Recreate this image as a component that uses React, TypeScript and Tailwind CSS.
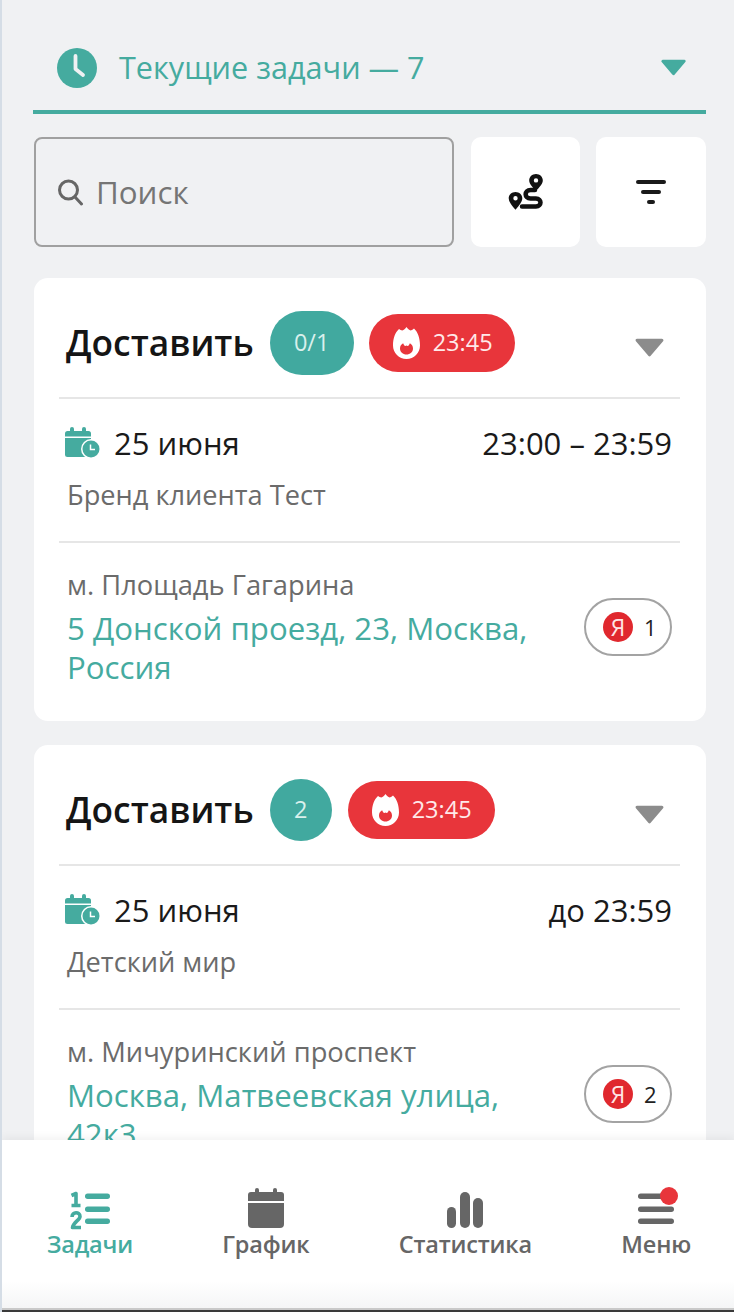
import React from 'react';

const ClockIcon = () => (
  <svg width="40" height="40" viewBox="0 0 40 40" className="shrink-0">
    <circle cx="20" cy="20" r="20" fill="#45ab9f" />
    <path d="M18.500 8v13l7.500 6" fill="none" stroke="#f0f1f3" strokeWidth="3.800" strokeLinecap="round" strokeLinejoin="round" />
  </svg>
);

const SearchIcon = () => (
  <svg width="28" height="28" viewBox="0 0 28 28" className="shrink-0">
    <circle cx="12.500" cy="12" r="9" fill="none" stroke="#666666" strokeWidth="3" />
    <path d="M19 19l6.500 7" stroke="#666666" strokeWidth="3" strokeLinecap="round" />
  </svg>
);

const RouteIcon = () => (
  <svg width="36" height="36" viewBox="0 0 36 36">
    <path d="M27 16H22.500C16 16 16 24.500 22.500 24.500H28C34 24.500 34 32.500 28 32.500H14" fill="none" stroke="#111" strokeWidth="4.500" strokeLinecap="round" />
    <path fillRule="evenodd" d="M28 0c3.800 0 6.800 2.800 6.800 6.400 0 3-3.200 6.800-6.800 10.400-3.600-3.600-6.800-7.400-6.800-10.400C21.200 2.800 24.200 0 28 0zm0 4.200a2.200 2.200 0 1 0 0 4.400 2.200 2.200 0 0 0 0-4.400z" fill="#111" />
    <path fillRule="evenodd" d="M7.500 18c3.800 0 6.800 2.800 6.800 6.200 0 3.400-3.200 7.600-6.800 11.500C3.900 31.800.7 27.600.7 24.200.7 20.800 3.700 18 7.500 18zm0 4a2.200 2.200 0 1 0 0 4.400 2.200 2.200 0 0 0 0-4.400z" fill="#111" />
  </svg>
);

const FilterIcon = () => (
  <svg width="30" height="24" viewBox="0 0 30 24">
    <rect x="0" y="0" width="30" height="4" rx="2" fill="#1a1a1a" />
    <rect x="5" y="10" width="20" height="4" rx="2" fill="#1a1a1a" />
    <rect x="11" y="20" width="8" height="4" rx="2" fill="#1a1a1a" />
  </svg>
);

const Flame = () => (
  <svg width="27" height="32" viewBox="0 0 27 32" className="shrink-0">
    <path d="M13.500 0c1.300 1.800 2.600 3 4.200 3.600C19 3.200 20 2.400 21 1.500 24.800 5 27 11 27 18.500 27 26 21 32 13.500 32S0 26 0 18.500C0 11 2.200 5.500 6 2 7 2.800 8 3.400 9.300 3.600 10.900 3 12.200 1.800 13.500 0z" fill="#ffffff" />
    <path d="M13.500 18.500c1 .7 1.900.4 2.500-.5.400-.6.700-1.100.9-1.700 1.800 1 3.100 2.900 3.100 5.200 0 3.500-2.900 6-6.500 6S7 25 7 21.500c0-2.300 1.300-4.200 3.100-5.200.2.600.5 1.100.9 1.700.6.900 1.500 1.200 2.500.5z" fill="#e8353b" />
  </svg>
);

const CalendarClock = () => (
  <svg width="36" height="34" viewBox="0 0 36 34" className="shrink-0">
    <rect x="0" y="5" width="26" height="26" rx="2.500" fill="#45ab9f" />
    <rect x="5" y="1" width="4" height="7" rx="2" fill="#45ab9f" />
    <rect x="17" y="1" width="4" height="7" rx="2" fill="#45ab9f" />
    <rect x="0" y="10.500" width="26" height="1.500" fill="#ffffff" />
    <circle cx="26" cy="23" r="10" fill="#ffffff" />
    <circle cx="26" cy="23" r="8.500" fill="#45ab9f" />
    <path d="M25.500 18.500v5h4.500" fill="none" stroke="#ffffff" strokeWidth="1.500" />
  </svg>
);

const Caret = ({ color, w, h }: { color: string; w: number; h: number }) => (
  <svg width={w} height={h} viewBox="0 0 30 18">
    <path d="M3 2h24L15 16z" fill={color} stroke={color} strokeWidth="3" strokeLinejoin="round" />
  </svg>
);

const TasksIcon = () => (
  <svg width="40" height="36" viewBox="0 0 40 36" className="overflow-visible">
    <rect x="15" y="1.500" width="25" height="5.500" rx="2.700" fill="#45ab9f" />
    <rect x="15" y="14.500" width="25" height="5.500" rx="2.700" fill="#45ab9f" />
    <rect x="15" y="26.500" width="25" height="5.500" rx="2.700" fill="#45ab9f" />
    <path d="M1.500 3.500L6 1.500V13M1.500 13.500h9" fill="none" stroke="#45ab9f" strokeWidth="3.600" strokeLinejoin="round" />
    <path d="M2 25c0-5.500 8-5.500 8-.5 0 3.500-6.500 5.500-7.500 11h8.500" fill="none" stroke="#45ab9f" strokeWidth="3.600" strokeLinejoin="round" />
  </svg>
);

const ScheduleIcon = () => (
  <svg width="36" height="40" viewBox="0 0 36 40">
    <rect x="0" y="4" width="36" height="14" rx="3" fill="#666666" />
    <rect x="7" y="0" width="4" height="8" rx="2" fill="#666666" />
    <rect x="25" y="0" width="4" height="8" rx="2" fill="#666666" />
    <path d="M0 14h36v22a4 4 0 0 1-4 4H4a4 4 0 0 1-4-4z" fill="#666666" />
    <rect x="0" y="13" width="36" height="2" fill="#ffffff" />
  </svg>
);

const StatsIcon = () => (
  <svg width="36" height="36" viewBox="0 0 36 36">
    <rect x="0" y="15" width="9" height="21" rx="4.500" fill="#666666" />
    <rect x="13" y="0" width="10" height="36" rx="5" fill="#666666" />
    <rect x="26" y="6" width="10" height="30" rx="5" fill="#666666" />
  </svg>
);

const MenuIcon = () => (
  <div className="relative w-[36px] h-[36px]">
    <svg width="36" height="36" viewBox="0 0 36 36">
      <rect x="0" y="1.500" width="36" height="5.500" rx="2.700" fill="#666666" />
      <rect x="0" y="14.500" width="36" height="5.500" rx="2.700" fill="#666666" />
      <rect x="0" y="26.500" width="36" height="5.500" rx="2.700" fill="#666666" />
    </svg>
    <span className="absolute right-[-4px] top-[-5px] w-[18px] h-[18px] rounded-full bg-[#e8353b]" />
  </div>
);

const YandexBadge = ({ count }: { count: number }) => (
  <div className="shrink-0 w-[88px] h-[58px] rounded-full border-2 border-[#a3a3a3] bg-white flex items-center pl-[17px] gap-[11px]">
    <span className="w-[30px] h-[30px] rounded-full bg-[#e0282e] text-[#ffe6e6] text-[23px] leading-[30px] text-center">Я</span>
    <span className="text-[22px] text-[#222222]">{count}</span>
  </div>
);

type TaskCardProps = {
  countLabel: string;
  countClass: string;
  hotClass: string;
  time: string;
  brand: string;
  metro: string;
  address: string[];
  yandex: number;
};

const TaskCard = ({ countLabel, countClass, hotClass, time, brand, metro, address, yandex }: TaskCardProps) => (
  <div className="bg-white rounded-[14px] mb-[24px] ml-[1px] shrink-0 pl-[25px] pr-[26px] h-[443px]">
    <div className="h-[121px] border-b-2 border-[#e6e6e6] flex items-center pl-[7px] pr-[15px] pt-[10px]">
      <span className="text-[35.300px] font-semibold text-[#151515] mr-[16px]">Доставить</span>
      <span className={`bg-[#41a99f] text-[#d9f0ec] text-[23.500px] flex items-center justify-center rounded-full ${countClass}`}>{countLabel}</span>
      <span className={`bg-[#e8353b] text-[#ffe9e9] text-[23.500px] flex items-center rounded-full ml-[16px] h-[58px] pl-[24px] gap-[13px] ${hotClass}`}>
        <Flame />
        23:45
      </span>
      <span className="ml-auto mt-[10px]">
        <Caret color="#8c8c8c" w={31} h={19} />
      </span>
    </div>
    <div className="h-[144px] border-b-2 border-[#e6e6e6] pl-[6px] pr-[8px] pt-[23px]">
      <div className="flex items-center h-[42px]">
        <CalendarClock />
        <span className="text-[31px] text-[#1a1a1a] ml-[13px]">25 июня</span>
        <span className="text-[31px] text-[#1a1a1a] ml-auto">{time}</span>
      </div>
      <div className="text-[27.200px] text-[#6b6b6b] pl-[2px] mt-[11px]">{brand}</div>
    </div>
    <div className="flex items-center pl-[8px] pr-[8px] pt-[24px]">
      <div className="flex-1 min-w-0">
        <div className="text-[27.300px] leading-[36px] mb-[6px] text-[#6b6b6b]">{metro}</div>
        {address.map((line) => (
          <div key={line} className="text-[31.200px] leading-[39px] text-[#45ab9f] whitespace-nowrap">{line}</div>
        ))}
      </div>
      <YandexBadge count={yandex} />
    </div>
  </div>
);

const NavItem = ({ icon, label, active }: { icon: React.ReactNode; label: string; active?: boolean }) => (
  <div className="flex flex-col items-center">
    <div className="h-[40px] flex items-end">{icon}</div>
    <span className={`text-[23.500px] leading-[32px] font-semibold tracking-[-0.2px] ${active ? 'text-[#45ab9f]' : 'text-[#666666]'}`}>{label}</span>
  </div>
);

export default function App() {
  return (
    <div
      className="relative w-[734px] h-[1312px] overflow-hidden bg-[#f0f1f3] border-l-2 border-[#d5dde6] box-border"
      style={{ fontFamily: '"Open Sans", "Noto Sans", sans-serif' }}
    >
      <div className="flex flex-col h-full pl-[31px] pr-[28px]">
        <div className="h-[114px] shrink-0 border-b-4 border-[#45ab9f] flex items-center pl-[24px] pr-[19px] pt-[25px]">
          <ClockIcon />
          <span className="text-[30.600px] text-[#45ab9f] ml-[22px]">Текущие задачи — 7</span>
          <span className="ml-auto">
            <Caret color="#45ab9f" w={27} h={17} />
          </span>
        </div>
        <div className="flex gap-[16px] mt-[23px] mb-[31px] shrink-0">
          <div className="w-[420px] ml-[1px] mr-[1px] h-[110px] rounded-[8px] border-2 border-[#a0a0a0] flex items-center pl-[20px] gap-[12px]">
            <SearchIcon />
            <span className="text-[31.300px] text-[#757575]">Поиск</span>
          </div>
          <div className="w-[109px] h-[110px] rounded-[10px] bg-white flex items-center justify-center">
            <RouteIcon />
          </div>
          <div className="w-[110px] h-[110px] rounded-[10px] bg-white flex items-center justify-center">
            <FilterIcon />
          </div>
        </div>
        <TaskCard
          countLabel="0/1"
          countClass="w-[84px] h-[64px]"
          hotClass="w-[146px] -translate-x-[1px]"
          time="23:00 – 23:59"
          brand="Бренд клиента Тест"
          metro="м. Площадь Гагарина"
          address={['5 Донской проезд, 23, Москва,', 'Россия']}
          yandex={1}
        />
        <TaskCard
          countLabel="2"
          countClass="w-[62px] h-[62px]"
          hotClass="w-[147px]"
          time="до 23:59"
          brand="Детский мир"
          metro="м. Мичуринский проспект"
          address={['Москва, Матвеевская улица,', '42к3']}
          yandex={2}
        />
      </div>
      <div className="absolute left-0 right-0 bottom-0 h-[172px] bg-gradient-to-b from-white from-[82%] to-[#f3f4f5] shadow-[0_-3px_8px_rgba(0,0,0,0.05)] flex justify-between pl-[45px] pr-[43px] pt-[48px]">
        <NavItem icon={<TasksIcon />} label="Задачи" active />
        <NavItem icon={<ScheduleIcon />} label="График" />
        <NavItem icon={<StatsIcon />} label="Статистика" />
        <NavItem icon={<MenuIcon />} label="Меню" />
        <div className="absolute left-0 right-0 bottom-0 h-[4px] border-t-2 border-[#c9c9c9] bg-[#3a3a3a]" />
      </div>
    </div>
  );
}
